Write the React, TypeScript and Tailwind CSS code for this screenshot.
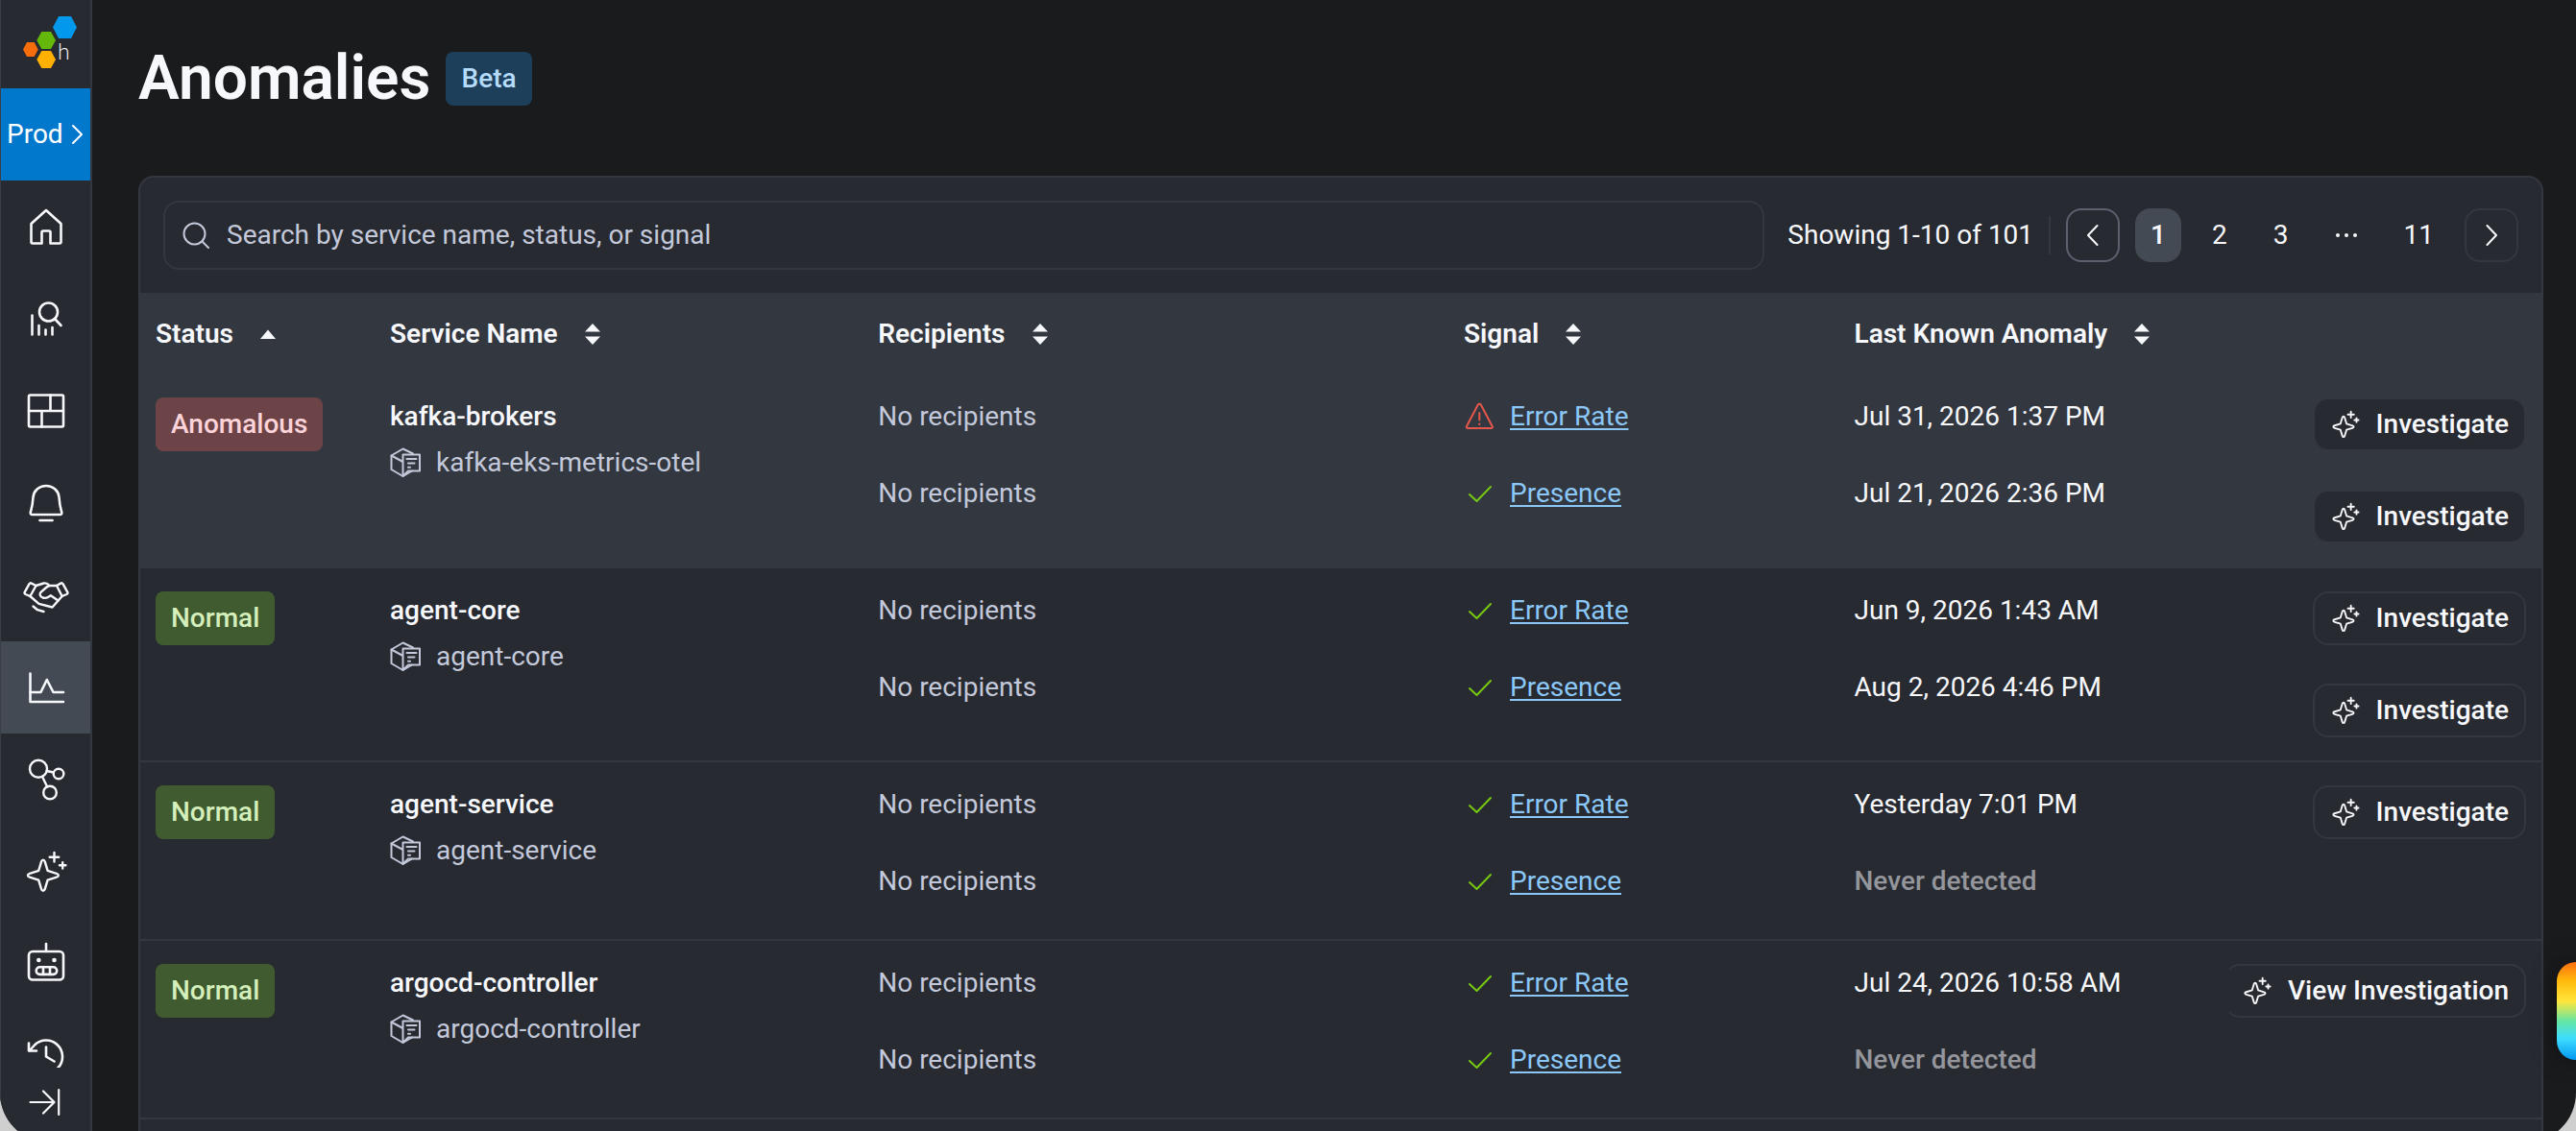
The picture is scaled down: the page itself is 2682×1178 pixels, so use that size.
import React from "react";

type IconProps = { className?: string };

type Signal = {
  name: string;
  alert?: boolean;
  last: string;
  action?: string;
};

type Service = {
  name: string;
  dataset: string;
  status: "Anomalous" | "Normal";
  signals: Signal[];
};

const services: Service[] = [
  {
    name: "kafka-brokers",
    dataset: "kafka-eks-metrics-otel",
    status: "Anomalous",
    signals: [
      { name: "Error Rate", alert: true, last: "Jul 31, 2026 1:37 PM", action: "Investigate" },
      { name: "Presence", last: "Jul 21, 2026 2:36 PM", action: "Investigate" },
    ],
  },
  {
    name: "agent-core",
    dataset: "agent-core",
    status: "Normal",
    signals: [
      { name: "Error Rate", last: "Jun 9, 2026 1:43 AM", action: "Investigate" },
      { name: "Presence", last: "Aug 2, 2026 4:46 PM", action: "Investigate" },
    ],
  },
  {
    name: "agent-service",
    dataset: "agent-service",
    status: "Normal",
    signals: [
      { name: "Error Rate", last: "Yesterday 7:01 PM", action: "Investigate" },
      { name: "Presence", last: "" },
    ],
  },
  {
    name: "argocd-controller",
    dataset: "argocd-controller",
    status: "Normal",
    signals: [
      { name: "Error Rate", last: "Jul 24, 2026 10:58 AM", action: "View Investigation" },
      { name: "Presence", last: "" },
    ],
  },
];

const columns = [
  { label: "Status", width: "w-[9.76%]", sorted: true },
  { label: "Service Name", width: "w-[20.33%]" },
  { label: "Recipients", width: "w-[24.39%]" },
  { label: "Signal", width: "w-[16.26%]" },
  { label: "Last Known Anomaly", width: "w-[16.26%]" },
];

const Stroke = ({
  className = "size-12",
  width = 2.6,
  box = "0 0 48 48",
  children,
}: IconProps & { width?: number; box?: string; children: React.ReactNode }) => (
  <svg
    viewBox={box}
    className={className}
    fill="none"
    stroke="currentColor"
    strokeWidth={width}
    strokeLinecap="round"
    strokeLinejoin="round"
    aria-hidden="true"
  >
    {children}
  </svg>
);

const Logo = () => (
  <svg viewBox="1 0 60 60" className="size-15" aria-hidden="true">
    <path fill="#0298ec" d="M41 5h13l6 11.5L54 28H41l-6-11.5z" />
    <path fill="#64b80a" d="M23.3 21H33l5 9-5 9h-9.7l-5-9z" />
    <path fill="#f66e0b" d="M8 32h7.7l4 7.5-4 7.5H8l-4-7.5z" />
    <path fill="#ffb000" d="M23.3 41H33l5 9-5 9h-9.7l-5-9z" />
    <text x="40" y="50" fill="#fff" fontFamily="Lato" fontWeight="300" fontSize="23">
      h
    </text>
  </svg>
);

const HomeIcon = () => (
  <Stroke>
    <path d="M24 7 L8.5 21 V40 a1.5 1.5 0 0 0 1.5 1.5 H19.500 V30 a1.5 1.5 0 0 1 1.5-1.5 h6 a1.5 1.5 0 0 1 1.5 1.5 V41.5 H38 a1.5 1.5 0 0 0 1.5-1.5 V21 Z" />
  </Stroke>
);

const QueryIcon = () => (
  <Stroke>
    <circle cx="26.5" cy="17" r="9.5" />
    <path d="M33 24 L39.5 31" />
    <path d="M9.5 20.5 V40.5 M16.5 31 V40.5 M23.5 35.5 V40.5 M30.5 33 V40.5" />
  </Stroke>
);

const BoardsIcon = () => (
  <Stroke>
    <rect x="6" y="7.5" width="36" height="33" rx="1.5" />
    <path d="M6 24 H42 M28.5 7.5 V24 M19.5 24 V40.5" />
  </Stroke>
);

const BellIcon = () => (
  <Stroke>
    <path d="M24 6 C31.5 6 37 11.5 37.5 18 C38 26 38.5 28 40.2 33.5 C40.600 35 39.8 36 38.5 36 H9.5 C8.2 36 7.4 35 7.8 33.5 C9.5 28 10 26 10.5 18 C11 11.5 16.5 6 24 6 Z" />
    <path d="M17.5 42 H30.5" />
  </Stroke>
);

const HandshakeIcon = () => (
  <Stroke width={2.4}>
    <path d="M6.5 12.2 L1.8 20.6 a1.8 1.8 0 0 0 .8 2.4 L7.4 25 L13.5 14 L8.900 11.6 a1.8 1.8 0 0 0-2.4 .6 Z" />
    <path d="M41.5 12.2 L46.2 20.6 a1.8 1.8 0 0 1-.8 2.4 L40.6 25 L35 14 L39.1 11.600 a1.8 1.8 0 0 1 2.400 .6 Z" />
    <path d="M13.5 14 L21.5 11.5 C23.5 11.1 25 11.7 26.500 13" />
    <path d="M35 14 H28.5 C26.5 14 25.500 14.6 24 16 L18.500 20.800 C16.5 23 18 25.500 20.500 26.500 C22.500 27.2 24.500 26.900 26 26 L28.800 24.300 L36.500 29.500" />
    <path d="M7.4 25 L16.5 32.800 L30.500 36.500 L40.600 25" />
    <path d="M10.500 35.500 L15 39.200 L21.500 41" />
  </Stroke>
);

const AnomalyIcon = () => (
  <Stroke>
    <path d="M7.5 9.5 V39 H42" />
    <path d="M7.5 29 H18.5 L24.8 16 L31.5 29 H42" />
  </Stroke>
);

const ServiceMapIcon = () => (
  <Stroke width={2.4}>
    <circle cx="16" cy="12.7" r="9" />
    <circle cx="37" cy="18" r="5.3" />
    <circle cx="28" cy="37.5" r="6.8" />
    <path d="M24.7 15 L31.7 16.500 M20 20.800 L25 31.300" />
  </Stroke>
);

const SparkleIcon = ({ className = "size-12", width = 2.4 }: IconProps & { width?: number }) => (
  <Stroke className={className} width={width}>
    <path d="M19 13.600 C19.800 11 22 11 22.800 13.600 L25.600 22.900 L34.900 25.900 C37.500 26.700 37.500 28.900 34.900 29.700 L25.600 32.600 L22.800 41.800 C22 44.400 19.800 44.400 19 41.800 L16.200 32.600 L6.900 29.700 C4.300 28.900 4.300 26.700 6.900 25.900 L16.200 22.900 Z" />
    <path d="M32.500 4 V13.500 M27.700 8.700 H37.200 M41.200 14.200 V20.500 M38 17.300 H44.400" />
  </Stroke>
);

const RobotIcon = () => (
  <Stroke>
    <rect x="6" y="11" width="36" height="29.5" rx="4" />
    <path d="M24 3 V11" />
    <rect x="13.7" y="27.3" width="21.5" height="7.6" rx="3.8" />
    <path d="M21 27.3 V34.9 M28 27.3 V34.9" />
    <circle cx="16.3" cy="20" r="1" fill="currentColor" />
    <circle cx="32.5" cy="20" r="1" fill="currentColor" />
  </Stroke>
);

const HistoryIcon = () => (
  <Stroke>
    <path d="M7 18 L12 12.500 A17 17 0 1 1 13 37.500" />
    <path d="M6 10.500 V18.500 H14" />
    <path d="M24 14.500 V24.500 L32.500 29.500" />
  </Stroke>
);

const DatasetIcon = () => (
  <Stroke className="size-8 shrink-0" width={2} box="0 0 32 32">
    <path d="M24 6.500 L13.500 1.500 L1.500 8.500 V23 L13.500 30 L23 24.500" />
    <path d="M1.500 8.500 L13.500 15 M13.500 30 V7.500 H31 V24.500 H19 L13.500 30" />
    <path d="M17.500 12 H27.500 M19 16.500 H25.500 M19 20.700 H21" />
  </Stroke>
);

const WarningIcon = () => (
  <Stroke className="size-8 shrink-0 text-[#e5574b]" width={2} box="0 0 32 32">
    <path d="M14.8 3.5 L3 26 C2.5 27.2 3 28 4.2 28 H28.5 C29.7 28 30.300 27.2 29.7 26 L17.8 3.5 C17.2 2.4 15.4 2.4 14.8 3.5 Z" />
    <path d="M16.3 12 V19.5 M16.3 23.6 V23.9" />
  </Stroke>
);

const CheckIcon = () => (
  <Stroke className="size-8 shrink-0 text-[#76c813]" width={2} box="0 0 32 32">
    <path d="M6 17 L13.5 24 L28 9" />
  </Stroke>
);

const SortIcon = ({ sorted }: { sorted?: boolean }) => (
  <svg viewBox="0 0 16 24" className="h-6 w-4" fill="currentColor" aria-hidden="true">
    {sorted ? (
      <path d="M8 7.5 L16 17 H0 Z" />
    ) : (
      <path d="M8 1 L16 9.5 H0 Z M0 14.5 H16 L8 23 Z" />
    )}
  </svg>
);

const navItems = [
  { label: "Home", icon: HomeIcon },
  { label: "Query", icon: QueryIcon },
  { label: "Boards", icon: BoardsIcon },
  { label: "Triggers", icon: BellIcon },
  { label: "SLOs", icon: HandshakeIcon },
  { label: "Anomalies", icon: AnomalyIcon, active: true },
  { label: "Service Map", icon: ServiceMapIcon },
  { label: "Canvas", icon: SparkleIcon },
  { label: "Agents", icon: RobotIcon },
  { label: "History", icon: HistoryIcon },
];

const Sidebar = () => (
  <aside className="flex w-24 shrink-0 flex-col border-r-2 border-l border-r-[#33373f] border-l-[#3b3e45] bg-[#282a31]">
    <a href="#" aria-label="Honeycomb" className="flex h-[92px] shrink-0 items-start pt-3 pl-5">
      <Logo />
    </a>
    <button className="flex h-24 shrink-0 items-center justify-between bg-[#0278cd] pr-2 pl-1.5 text-[28px] text-white">
      Prod
      <Stroke className="h-5 w-3" width={2} box="0 0 12 20">
        <path d="M2 1 L11 10 L2 19" />
      </Stroke>
    </button>
    <nav className="min-h-0 flex-1 overflow-hidden">
      {navItems.map(({ label, icon: Icon, active }) => (
        <a
          key={label}
          href="#"
          aria-label={label}
          className={
            active
              ? "flex h-24 items-center justify-center bg-[#444a53]"
              : "flex h-24 items-center justify-center"
          }
        >
          <Icon />
        </a>
      ))}
    </nav>
    <div className="flex h-[78px] shrink-0 items-start justify-center pt-[18px]">
      <button aria-label="Expand navigation">
        <Stroke className="size-9" width={2.2} box="0 0 36 36">
          <path d="M1.5 18 H26.5 M15 6.5 L26.5 18 L15 29.5 M31.2 5 V31" />
        </Stroke>
      </button>
    </div>
  </aside>
);

const Pagination = () => (
  <nav aria-label="Pagination" className="flex items-center gap-4">
    <button
      aria-label="Previous page"
      className="flex size-14 items-center justify-center rounded-2xl border-2 border-[#5c6170]"
    >
      <Stroke className="h-6 w-3" width={2} box="0 0 12 24">
        <path d="M10.5 2 L1 12 L10.5 22" />
      </Stroke>
    </button>
    <button aria-current="page" className="h-14 rounded-2xl bg-[#444a53] px-4 font-medium">
      1
    </button>
    <button className="h-14 px-4">2</button>
    <button className="h-14 px-4">3</button>
    <span className="px-4">
      <svg viewBox="0 0 24 24" className="size-6" fill="currentColor" aria-label="More pages">
        <circle cx="3" cy="12" r="2" />
        <circle cx="12" cy="12" r="2" />
        <circle cx="21" cy="12" r="2" />
      </svg>
    </span>
    <button className="h-14 px-4">11</button>
    <button
      aria-label="Next page"
      className="flex size-14 items-center justify-center rounded-2xl border-2 border-[#33373f]"
    >
      <Stroke className="h-6 w-3" width={2} box="0 0 12 24">
        <path d="M1.5 2 L11 12 L1.5 22" />
      </Stroke>
    </button>
  </nav>
);

const ServiceRow = ({ name, dataset, status, signals }: Service) => {
  const anomalous = status === "Anomalous";

  return (
    <tr
      className={
        anomalous
          ? "h-[186px] border-b-2 border-[#33373f] bg-[#33373f] align-top"
          : "h-[186px] border-b-2 border-[#33373f] align-top"
      }
    >
      <td className="py-6 pl-4">
        <span
          className={
            anomalous
              ? "inline-flex h-14 items-center rounded-lg bg-[#6c4347] px-4 font-medium text-[#fcd3d8]"
              : "inline-flex h-14 items-center rounded-lg bg-[#3f5b2f] px-4 font-medium text-[#d5efbc]"
          }
        >
          {status}
        </span>
      </td>
      <td className="py-6 pl-4">
        <div className="font-medium">{name}</div>
        <div className="mt-2 flex items-center gap-4 text-[#c3c9da]">
          <DatasetIcon />
          {dataset}
        </div>
      </td>
      <td className="py-6 pl-4 text-[#c3c9da]">
        <div className="flex flex-col gap-10">
          {signals.map((signal) => (
            <span key={signal.name}>No recipients</span>
          ))}
        </div>
      </td>
      <td className="py-6 pl-4">
        <div className="flex flex-col gap-10">
          {signals.map((signal) => (
            <div key={signal.name} className="flex items-center gap-4">
              {signal.alert ? <WarningIcon /> : <CheckIcon />}
              <a href="#" className="text-[#8bc8f8] underline decoration-2 underline-offset-3">
                {signal.name}
              </a>
            </div>
          ))}
        </div>
      </td>
      <td className="py-6 pl-4">
        <div className="flex flex-col gap-10">
          {signals.map((signal) =>
            signal.last ? (
              <span key={signal.name}>{signal.last}</span>
            ) : (
              <span key={signal.name} className="font-medium text-[#94969c]">
                Never detected
              </span>
            )
          )}
        </div>
      </td>
      {/* Wide actions are cut at the column edge */}
      <td className="overflow-hidden py-6 pr-4">
        <div className="flex flex-col items-end gap-10">
          {signals.map(
            (signal) =>
              signal.action && (
                <button
                  key={signal.name}
                  className="flex h-14 items-center gap-4 rounded-2xl border-2 border-[#33373f] bg-[#282a31] px-4 font-medium whitespace-nowrap"
                >
                  <SparkleIcon className="size-8 shrink-0" width={2.8} />
                  {signal.action}
                </button>
              )
          )}
        </div>
      </td>
    </tr>
  );
};

const App = () => {
  return (
    <div className="h-screen overflow-hidden bg-[#cfcfcf] font-['Roboto',sans-serif] text-[28px] leading-10 text-[#f7f8fc]">
      <div className="flex h-[calc(100vh+12px)] overflow-hidden rounded-b-[52px] bg-[#1a1b1d]">
        <Sidebar />

        <main className="min-w-0 flex-1 overflow-hidden pr-[34px] pl-12">
          <header className="flex h-[183px] items-start gap-4 pt-11">
            <h1 className="text-[64px] leading-[76px] font-semibold">Anomalies</h1>
            <span className="mt-[10px] flex h-14 items-center rounded-lg bg-[#1e3f5a] px-4 font-medium text-[#b5dcfb]">
              Beta
            </span>
          </header>

          <section className="overflow-hidden rounded-t-2xl border-2 border-[#33373f] bg-[#282a31]">
            <div className="flex items-center p-6">
              <label className="flex h-18 flex-1 items-center gap-4 rounded-2xl border-2 border-[#33373f] px-4 text-[#c3c9da]">
                <Stroke className="size-8 shrink-0" width={2} box="0 0 32 32">
                  <circle cx="14.5" cy="14.5" r="11" />
                  <path d="M22.5 22.5 L29 29" />
                </Stroke>
                <input
                  type="text"
                  aria-label="Search anomalies"
                  placeholder="Search by service name, status, or signal"
                  className="min-w-0 flex-1 bg-transparent outline-none placeholder:text-[#c3c9da]"
                />
              </label>
              <span className="ml-6">Showing 1-10 of 101</span>
              <span className="mx-4 h-10 w-0.5 bg-[#33373f]" />
              <Pagination />
            </div>

            <table className="w-full table-fixed border-collapse text-left">
              <thead>
                <tr className="h-[85px] bg-[#33373f]">
                  {columns.map((column) => (
                    <th key={column.label} className={`${column.width} pl-4 font-semibold`}>
                      <button className="flex items-center gap-7">
                        {column.label}
                        <SortIcon sorted={column.sorted} />
                      </button>
                    </th>
                  ))}
                  <th className="w-[13%]" aria-label="Actions" />
                </tr>
              </thead>
              <tbody>
                {services.map((service) => (
                  <ServiceRow key={service.name} {...service} />
                ))}
              </tbody>
            </table>
            <div className="h-20" />
          </section>
        </main>
      </div>

      <button
        aria-label="Open assistant"
        className="fixed right-0 bottom-[74px] h-[102px] w-5 rounded-l-[20px] bg-[linear-gradient(to_bottom,#fd6d10,#ffb60a_18%,#ffe63b_40%,#66e6a2_60%,#3ddcff_78%,#0298f0)] shadow-[0_0_24px_rgba(0,0,0,0.5)]"
      />
    </div>
  );
};

export default App;
